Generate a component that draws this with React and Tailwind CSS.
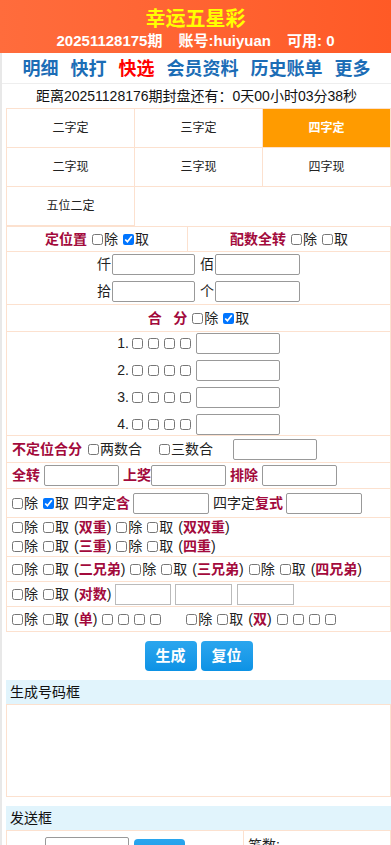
import React from "react";

const RED = "text-[#a30a3c] font-bold";

function Chk({ checked, label, className = "" }) {
  return (
    <span className={"inline-flex items-center " + className}>
      <input
        type="checkbox"
        defaultChecked={checked}
        className="w-[11px] h-[11px] m-0 mr-[1px] shrink-0"
      />
      {label}
    </span>
  );
}

function Box({ className = "" }) {
  return (
    <input
      type="checkbox"
      className={"w-[11px] h-[11px] m-0 shrink-0 " + className}
    />
  );
}

function Inp({ className = "" }) {
  return (
    <input
      type="text"
      className={
        "h-[21px] border border-[#999] rounded-[2px] bg-white outline-none shrink-0 " +
        className
      }
    />
  );
}

function PairChk({ tag, checkedQu }) {
  return (
    <span className="inline-flex items-center gap-[5px]">
      <Chk label="除" />
      <Chk label="取" checked={checkedQu} />
      {tag && (
        <span>
          (<span className={RED}>{tag}</span>)
        </span>
      )}
    </span>
  );
}

export default function App() {
  const tabs1 = ["二字定", "三字定", "四字定"];
  const tabs2 = ["二字现", "三字现", "四字现"];
  return (
    <div className="w-[391px] min-h-[845px] bg-white text-[#222] font-['Liberation_Sans','Noto_Sans_CJK_SC',sans-serif] overflow-hidden">
      {/* header */}
      <div className="h-[53px] bg-linear-to-r from-[#ff6c3c] to-[#ff5a26] flex flex-col items-center pt-[7px]">
        <div className="text-[20px] leading-[24px] font-bold text-[#ffff00]">
          幸运五星彩
        </div>
        <div className="text-[15px] leading-[20px] font-bold text-white flex gap-[16px]">
          <span>20251128175期</span>
          <span>账号:huiyuan</span>
          <span>可用: 0</span>
        </div>
      </div>

      <div className="border-l-[2px] border-[#e8e8e8]">
        {/* nav */}
        <div className="h-[31px] flex items-center justify-center gap-[12px] text-[18px] font-bold text-[#1c6db6] border-b border-[#eeeeee] pt-[2px]">
          <span>明细</span>
          <span>快打</span>
          <span className="text-[#ff0000]">快选</span>
          <span>会员资料</span>
          <span>历史账单</span>
          <span>更多</span>
        </div>
        {/* countdown */}
        <div className="h-[24px] flex items-center justify-center text-[14px] text-[#111]">
          距离20251128176期封盘还有：0天00小时03分38秒
        </div>

        <div className="pl-[4px]">
          {/* tabs */}
          <div className="grid grid-cols-3 border-l border-t border-[#fce1cf] text-[12px]">
            {tabs1.map((t, i) => (
              <div
                key={t}
                className={
                  "h-[39px] flex items-center justify-center border-r border-b border-[#fce1cf] " +
                  (i === 2 ? "bg-[#ff9b00] text-white font-bold" : "text-[#222]")
                }
              >
                {t}
              </div>
            ))}
            {tabs2.map((t) => (
              <div
                key={t}
                className="h-[39px] flex items-center justify-center border-r border-b border-[#fce1cf]"
              >
                {t}
              </div>
            ))}
            <div className="h-[39px] flex items-center justify-center border-r border-b border-[#fce1cf]">
              五位二定
            </div>
            <div className="col-span-2" />
          </div>

          {/* form table */}
          <div className="border-l border-t border-r border-[#fce1cf] text-[14px]">
            {/* row A */}
            <div className="h-[25px] flex border-b border-[#fce1cf]">
              <div className="w-[181px] flex items-center justify-center gap-[5px] border-r border-[#fce1cf]">
                <span className={RED}>定位置</span>
                <PairChk checkedQu />
              </div>
              <div className="flex-1 flex items-center justify-center gap-[5px]">
                <span className={RED}>配数全转</span>
                <PairChk />
              </div>
            </div>

            {/* row B */}
            <div className="h-[53px] flex flex-col items-center justify-center gap-[6px] border-b border-[#fce1cf]">
              <div className="flex items-center">
                <span>仟</span>
                <Inp className="w-[83px] ml-[1px]" />
                <span className="ml-[5px]">佰</span>
                <Inp className="w-[85px] ml-[1px]" />
              </div>
              <div className="flex items-center">
                <span>拾</span>
                <Inp className="w-[83px] ml-[1px]" />
                <span className="ml-[5px]">个</span>
                <Inp className="w-[85px] ml-[1px]" />
              </div>
            </div>

            {/* row C */}
            <div className="h-[27px] flex items-center justify-center gap-[5px] border-b border-[#fce1cf]">
              <span className={RED + " whitespace-pre"}>合   分</span>
              <PairChk checkedQu />
            </div>

            {/* row D */}
            <div className="h-[104px] flex flex-col items-center justify-center gap-[6px] border-b border-[#fce1cf]">
              {[1, 2, 3, 4].map((n) => (
                <div key={n} className="flex items-center">
                  <span className="mr-[3px]">{n}.</span>
                  <span className="flex items-center gap-[5px]">
                    <Box />
                    <Box />
                    <Box />
                    <Box />
                  </span>
                  <Inp className="w-[84px] ml-[5px]" />
                </div>
              ))}
            </div>

            {/* row E */}
            <div className="h-[27px] flex items-center pl-[5px] border-b border-[#fce1cf]">
              <span className={RED}>不定位合分</span>
              <Chk label="两数合" className="ml-[6px]" />
              <Chk label="三数合" className="ml-[17px]" />
              <Inp className="w-[84px] ml-[20px]" />
            </div>

            {/* row F */}
            <div className="h-[26px] flex items-center pl-[5px] border-b border-[#fce1cf]">
              <span className={RED}>全转</span>
              <Inp className="w-[75px] ml-[4px]" />
              <span className={RED + " ml-[4px]"}>上奖</span>
              <Inp className="w-[75px]" />
              <span className={RED + " ml-[4px]"}>排除</span>
              <Inp className="w-[75px] ml-[4px]" />
            </div>

            {/* row G */}
            <div className="h-[29px] flex items-center pl-[5px] border-b border-[#fce1cf]">
              <PairChk checkedQu />
              <span className="ml-[5px]">
                四字定<span className={RED}>含</span>
              </span>
              <Inp className="w-[76px] ml-[3px]" />
              <span className="ml-[4px]">
                四字定<span className={RED}>复式</span>
              </span>
              <Inp className="w-[76px] ml-[3px]" />
            </div>

            {/* row H */}
            <div className="h-[39px] flex flex-col justify-center pl-[5px] border-b border-[#fce1cf] leading-[19px]">
              <div className="flex items-center gap-[5px]">
                <PairChk tag="双重" />
                <PairChk tag="双双重" />
              </div>
              <div className="flex items-center gap-[5px]">
                <PairChk tag="三重" />
                <PairChk tag="四重" />
              </div>
            </div>

            {/* row I */}
            <div className="h-[25px] flex items-center gap-[5px] pl-[5px] border-b border-[#fce1cf]">
              <PairChk tag="二兄弟" />
              <PairChk tag="三兄弟" />
              <PairChk tag="四兄弟" />
            </div>

            {/* row J */}
            <div className="h-[25px] flex items-center pl-[5px] border-b border-[#fce1cf]">
              <PairChk tag="对数" />
              <Inp className="w-[56px] ml-[4px] border-[#bbb] rounded-none" />
              <Inp className="w-[57px] ml-[4px] border-[#bbb] rounded-none" />
              <Inp className="w-[57px] ml-[5px] border-[#bbb] rounded-none" />
            </div>

            {/* row K */}
            <div className="h-[25px] flex items-center pl-[5px] border-b border-[#fce1cf]">
              <PairChk tag="单" />
              <span className="flex items-center gap-[5px] ml-[5px]">
                <Box />
                <Box />
                <Box />
                <Box />
              </span>
              <span className="ml-[25px] flex items-center gap-[5px]">
                <PairChk tag="双" />
                <span className="flex items-center gap-[5px]">
                  <Box />
                  <Box />
                  <Box />
                  <Box />
                </span>
              </span>
            </div>
          </div>

          {/* buttons */}
          <div className="flex justify-center gap-[4px] mt-[9px]">
            <button className="w-[52px] h-[30px] rounded-[4px] bg-linear-to-b from-[#2aa6ee] to-[#0c92e5] text-white font-bold text-[15px]">
              生成
            </button>
            <button className="w-[52px] h-[30px] rounded-[4px] bg-linear-to-b from-[#2aa6ee] to-[#0c92e5] text-white font-bold text-[15px]">
              复位
            </button>
          </div>

          {/* generated box */}
          <div className="mt-[9px] h-[24px] bg-[#e1f4fc] flex items-center pl-[4px] text-[14px] text-[#111]">
            生成号码框
          </div>
          <div className="h-[93px] border border-[#fce1cf]" />

          {/* send box */}
          <div className="mt-[9px] h-[24px] bg-[#e1f4fc] flex items-center pl-[4px] text-[14px] text-[#111]">
            发送框
          </div>
          <div className="flex border border-[#fce1cf] h-[40px]">
            <div className="w-[237px] border-r border-[#fce1cf] flex items-start pt-[6px]">
              <Inp className="w-[84px] ml-[38px]" />
              <button className="w-[51px] h-[28px] ml-[5px] mt-[2px] rounded-[4px] bg-linear-to-b from-[#2aa6ee] to-[#0c92e5]" />
            </div>
            <div className="flex-1 pl-[4px] pt-[4px] text-[14px]">笔数:</div>
          </div>
        </div>
      </div>
    </div>
  );
}
